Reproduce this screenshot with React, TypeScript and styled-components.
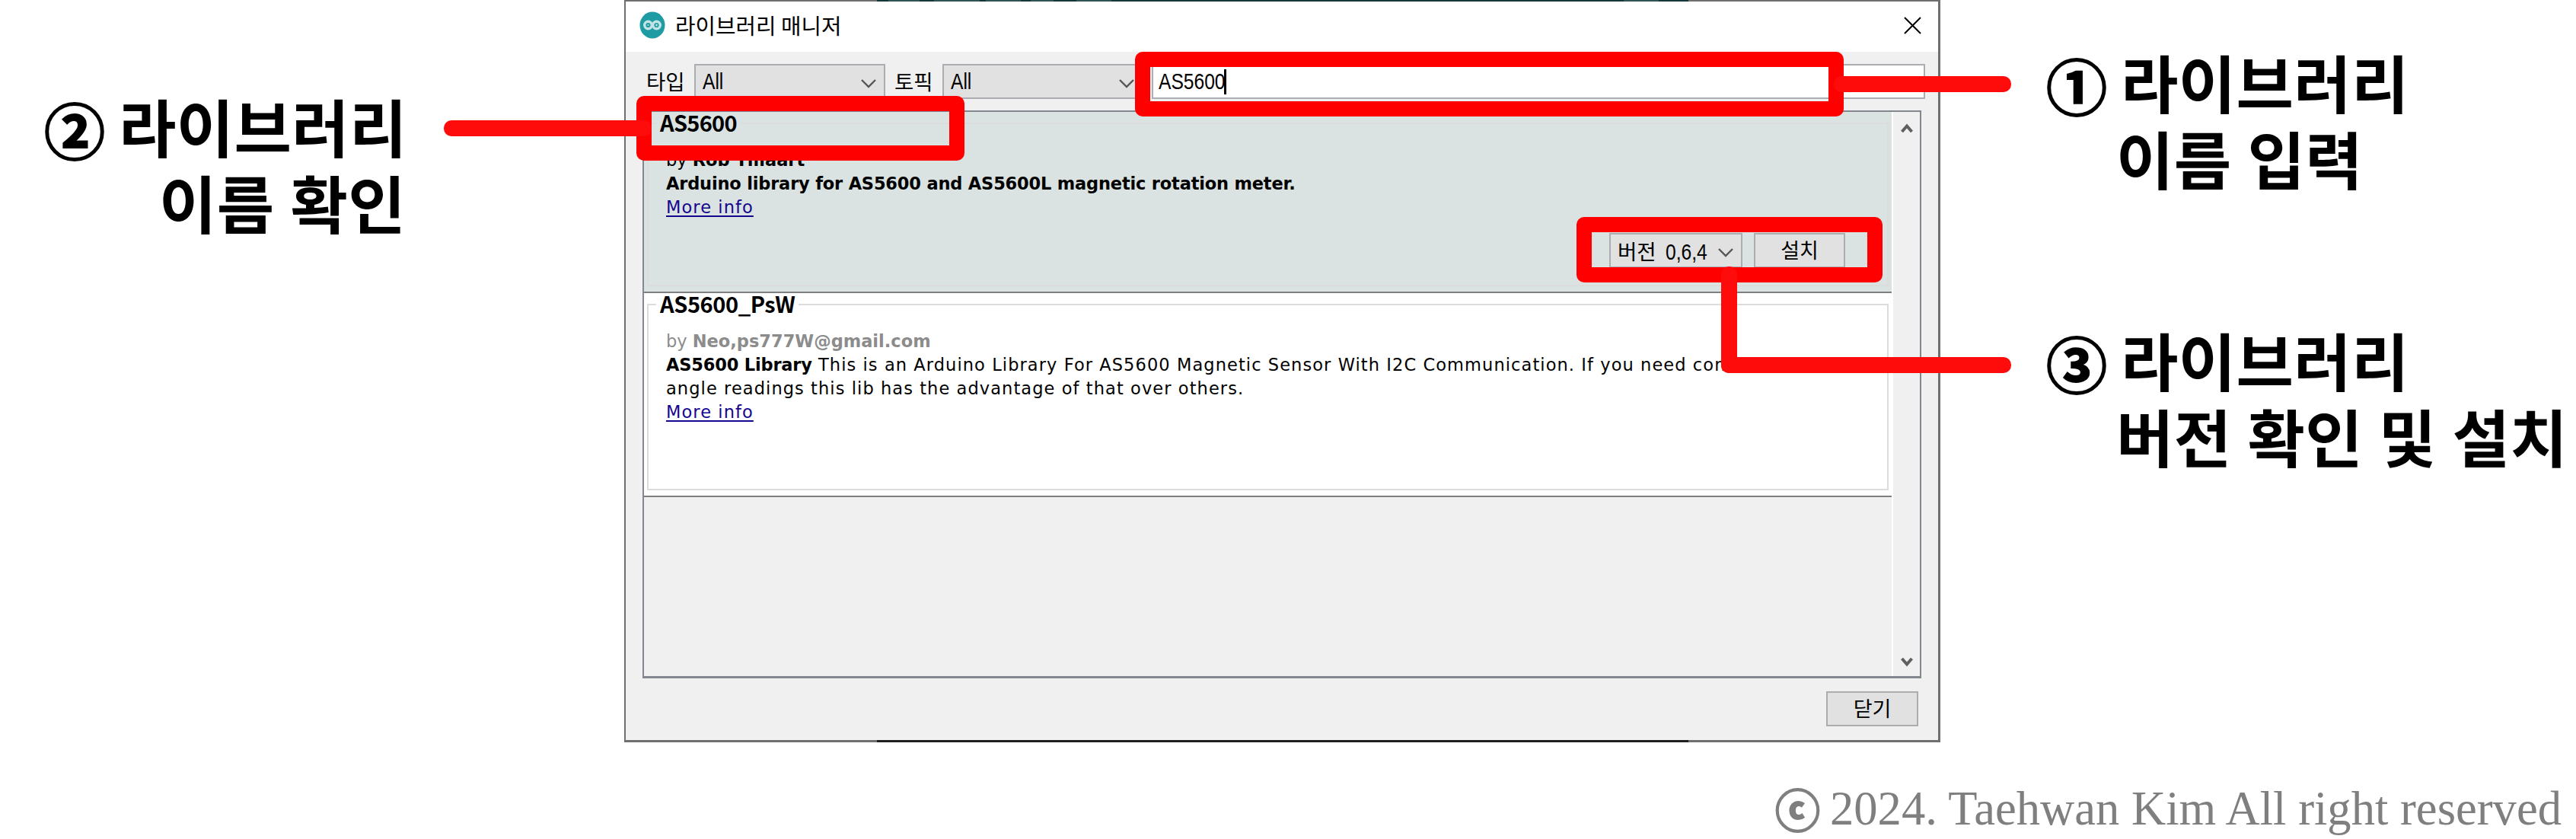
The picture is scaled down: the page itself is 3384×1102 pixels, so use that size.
import React from "react";
import styled, { createGlobalStyle } from "styled-components";

const GlobalStyle = createGlobalStyle`
  * {
    box-sizing: border-box;
  }

  body {
    margin: 0;
    background: #fff;
    overflow: hidden;
  }
`;

const KOREAN = `"Noto Sans CJK KR", sans-serif`;

const Slide = styled.div`
  position: relative;
  display: grid;
  grid-template-columns: 820px 1729px 835px;
  grid-template-rows: 975px 127px;
  width: 3384px;
  height: 1102px;
  color: #000;
  font-family: ${KOREAN};
`;

const Side = styled.div<{ $top: number; $gap?: number }>`
  display: flex;
  flex-direction: column;
  gap: ${(p) => p.$gap ?? 0}px;
  padding-top: ${(p) => p.$top}px;
`;

const Note = styled.div<{ $left: number; $indent: number }>`
  padding-left: ${(p) => p.$left}px;
  font-size: 82px;
  font-weight: 700;
  line-height: 100px;
  letter-spacing: 0.3px;
  word-spacing: 2px;
  white-space: nowrap;

  & > div:last-child {
    padding-left: ${(p) => p.$indent}px;
  }
`;

const NoteLine = styled.div`
  display: flex;
`;

const Marker = styled.span`
  width: 98px;
  margin: 3px 0 -3px -2px;
  font-size: 80px;
  -webkit-text-stroke: 2px #000;
`;

const Window = styled.div`
  display: flex;
  flex-direction: column;
  height: 975px;
  border: 2px solid #6f6f6f;
  border-right-width: 3px;
  border-bottom-width: 3px;
  background: #f0f0f0;
`;

const TitleBar = styled.div`
  display: flex;
  align-items: center;
  height: 66px;
  padding: 0 22px 4px 18px;
  background: #fff;
`;

const Title = styled.div`
  flex: 1;
  margin-left: 13px;
  font-size: 28.8px;
  line-height: 62px;
`;

const Toolbar = styled.div`
  display: flex;
  height: 77px;
  padding: 16px 17px 0 27px;
`;

const Label = styled.div<{ $width: number; $indent?: number }>`
  width: ${(p) => p.$width}px;
  padding-left: ${(p) => p.$indent ?? 0}px;
  font-size: 27.5px;
  line-height: 44px;
`;

const Select = styled.div<{ $width: number }>`
  display: flex;
  justify-content: space-between;
  align-items: center;
  width: ${(p) => p.$width}px;
  height: 46px;
  padding: 0 10px 0 9px;
  border: 2px solid #abadb3;
  background: #e1e1e1;
  font-size: 27.5px;
  line-height: 40px;
  word-spacing: 6px;
  white-space: nowrap;
`;

// condensed latin text, squeezed into the given width
const Narrow = styled.span<{ $width: number }>`
  display: inline-block;
  width: ${(p) => p.$width}px;
  font-family: "Liberation Sans", sans-serif;
  font-size: 30px;
  line-height: 36px;
  white-space: nowrap;
  transform: scaleX(0.82);
  transform-origin: left;
`;

const SearchInput = styled.div`
  display: flex;
  align-items: center;
  flex: 1;
  height: 46px;
  margin-left: 11px;
  padding-left: 7px;
  border: 2px solid #abadb3;
  background: #fff;
`;

const Caret = styled.span`
  width: 3px;
  height: 33px;
  background: #000;
`;

const ListPanel = styled.div`
  display: flex;
  width: 1680px;
  height: 746px;
  margin-left: 22px;
  border: 2px solid #828790;
  border-bottom-width: 3px;
`;

const List = styled.div`
  width: 1639px;
`;

const Scrollbar = styled.div`
  display: flex;
  flex-direction: column;
  justify-content: space-between;
  align-items: center;
  flex: 1;
  padding: 15px 0 12px;
  border-left: 2px solid #fff;
`;

const Item = styled.div<{ $active?: boolean; $height: number }>`
  height: ${(p) => p.$height}px;
  padding: 3px 4px 7px 4px;
  border-bottom: 2px solid #7f7f7f;
  background: ${(p) => (p.$active ? "#dae3e1" : "#fff")};
`;

const Group = styled.fieldset`
  display: flex;
  flex-direction: column;
  height: 100%;
  min-width: 0;
  margin: 0;
  padding: 0 0 0 23px;
  border: 2px solid #dcdcdc;
  font-family: "DejaVu Sans", sans-serif;
  font-size: 22.5px;
  line-height: 31px;
  letter-spacing: 1.08px;
  white-space: nowrap;

  & b {
    letter-spacing: -0.18px;
  }
`;

const Legend = styled.legend<{ $track: number }>`
  height: 24px;
  margin-left: -13px;
  padding: 0 5px;
  font-family: ${KOREAN};
  font-size: 29px;
  font-weight: 700;
  line-height: 21px;
  letter-spacing: ${(p) => p.$track}px;
`;

const Author = styled.div<{ $muted?: boolean }>`
  margin-top: 21px;
  color: ${(p) => (p.$muted ? "#8c8c8c" : "#000")};
  letter-spacing: 0;

  & b {
    letter-spacing: 0;
  }
`;

const Link = styled.a`
  align-self: flex-start;
  color: #150690;
  text-decoration: underline;
  text-decoration-thickness: 2px;
  text-underline-offset: 3px;
`;

const Actions = styled.div`
  display: flex;
  justify-content: flex-end;
  gap: 15px;
  margin-top: 18px;
  padding-right: 55px;
  font-family: ${KOREAN};
  letter-spacing: 0;
`;

const Button = styled.div<{ $width: number }>`
  width: ${(p) => p.$width}px;
  height: 46px;
  border: 2px solid #adadad;
  background: #e1e1e1;
  font-size: 27px;
  line-height: 39px;
  text-align: center;
`;

const Footer = styled.div`
  display: flex;
  justify-content: flex-end;
  padding: 17px 26px 0 0;
`;

const Copyright = styled.div`
  display: flex;
  grid-column: 1 / 4;
  justify-content: flex-end;
  padding: 50px 19px 0 0;
  color: #7f7f7f;
  font-family: "Liberation Serif", serif;
  font-size: 62.6px;
  line-height: 74px;

  & > span {
    margin-right: 13px;
    font-family: ${KOREAN};
    font-size: 59px;
    font-weight: 700;
    -webkit-text-stroke: 2px #7f7f7f;
  }
`;

// what shows of the windows behind, along the top and bottom edge
const Edge = styled.div<{ $bottom?: boolean }>`
  position: absolute;
  top: ${(p) => (p.$bottom ? 972 : 0)}px;
  left: 1152px;
  width: 1066px;
  height: ${(p) => (p.$bottom ? 3 : 2)}px;
  background: ${(p) =>
    p.$bottom
      ? "#1e201f"
      : `linear-gradient(90deg, #15363a 15px, #2f5357 15px 56px, #15363a 56px 75px,
          #2f5357 75px 135px, #15363a 135px 143px, #2f5357 143px 189px, #15363a 189px 202px,
          #2f5357 202px 232px, #15363a 232px 262px, #2f5357 262px 308px, #15363a 308px 981px,
          #2f5357 981px 1027px, #15363a 1027px)`};
`;

type Rect = { $x: number; $y: number; $w: number; $h: number };

const Frame = styled.div<Rect>`
  position: absolute;
  left: ${(p) => p.$x}px;
  top: ${(p) => p.$y}px;
  width: ${(p) => p.$w}px;
  height: ${(p) => p.$h}px;
  border: 20.5px solid #f00;
  border-radius: 10px;
`;

const Pointer = styled.div<Rect>`
  position: absolute;
  left: ${(p) => p.$x}px;
  top: ${(p) => p.$y}px;
  width: ${(p) => p.$w}px;
  height: ${(p) => p.$h}px;
  border-radius: 10px;
  background: #fe0c0c;
`;

function Logo() {
  return (
    <svg width="34" height="36" viewBox="0 0 34 36">
      <ellipse cx="17" cy="18" rx="16.5" ry="17.5" fill="#1f9ba3" />
      <g fill="none" stroke="#c3e4e4" strokeWidth="3.4">
        <circle cx="11.5" cy="18" r="4.8" />
        <circle cx="22.5" cy="18" r="4.8" />
      </g>
      <path d="M10 18h3M21 18h3M22.5 16.5v3" stroke="#c3e4e4" strokeWidth="1.2" />
    </svg>
  );
}

function CloseIcon() {
  return (
    <svg width="23" height="23" viewBox="0 0 23 23">
      <path d="M1 1L22 22M22 1L1 22" stroke="#000" strokeWidth="2" />
    </svg>
  );
}

function Chevron() {
  return (
    <svg width="20" height="18" viewBox="0 0 20 18">
      <path d="M1 7L10 16L19 7" fill="none" stroke="#555" strokeWidth="2.4" />
    </svg>
  );
}

function ScrollArrow({ down }: { down?: boolean }) {
  return (
    <svg width="16" height="13" viewBox="0 0 16 13">
      <path
        d={down ? "M1.5 2L8 9.5L14.5 2" : "M1.5 11L8 3.5L14.5 11"}
        fill="none"
        stroke="#606060"
        strokeWidth="4"
      />
    </svg>
  );
}

export default function App() {
  return (
    <Slide>
      <GlobalStyle />
      <Side $top={115}>
        <Note $left={60} $indent={149}>
          <NoteLine>
            <Marker>②</Marker>라이브러리
          </NoteLine>
          <div>이름 확인</div>
        </Note>
      </Side>
      <Window>
        <TitleBar>
          <Logo />
          <Title>라이브러리 매니저</Title>
          <CloseIcon />
        </TitleBar>
        <Toolbar>
          <Label $width={63}>타입</Label>
          <Select $width={251}>
            <Narrow $width={28}>All</Narrow>
            <Chevron />
          </Select>
          <Label $width={75} $indent={12}>
            토픽
          </Label>
          <Select $width={264}>
            <Narrow $width={28}>All</Narrow>
            <Chevron />
          </Select>
          <SearchInput>
            <Narrow $width={86}>AS5600</Narrow>
            <Caret />
          </SearchInput>
        </Toolbar>
        <ListPanel>
          <List>
            <Item $active $height={238}>
              <Group>
                <Legend $track={-0.7}>AS5600</Legend>
                <Author>
                  by <b>Rob Tillaart</b>
                </Author>
                <div>
                  <b>
                    Arduino library for AS5600 and AS5600L magnetic rotation
                    meter.
                  </b>
                </div>
                <Link>More info</Link>
                <Actions>
                  <Select $width={175}>
                    <span>
                      버전 <Narrow $width={56}>0,6,4</Narrow>
                    </span>
                    <Chevron />
                  </Select>
                  <Button $width={120}>설치</Button>
                </Actions>
              </Group>
            </Item>
            <Item $height={268}>
              <Group>
                <Legend $track={-0.4}>AS5600_PsW</Legend>
                <Author $muted>
                  by <b>Neo,ps777W@gmail.com</b>
                </Author>
                <div>
                  <b>AS5600 Library</b> This is an Arduino Library For AS5600
                  Magnetic Sensor With I2C Communication. If you need continuous
                </div>
                <div>
                  angle readings this lib has the advantage of that over others.
                </div>
                <Link>More info</Link>
              </Group>
            </Item>
          </List>
          <Scrollbar>
            <ScrollArrow />
            <ScrollArrow down />
          </Scrollbar>
        </ListPanel>
        <Footer>
          <Button $width={121}>닫기</Button>
        </Footer>
      </Window>
      <Side $top={57} $gap={165}>
        <Note $left={141} $indent={90}>
          <NoteLine>
            <Marker>①</Marker>라이브러리
          </NoteLine>
          <div>이름 입력</div>
        </Note>
        <Note $left={141} $indent={90}>
          <NoteLine>
            <Marker>③</Marker>라이브러리
          </NoteLine>
          <div>버전 확인 및 설치</div>
        </Note>
      </Side>
      <Copyright>
        <span>ⓒ</span>2024. Taehwan Kim All right reserved
      </Copyright>
      <Edge />
      <Edge $bottom />
      <Frame $x={1491} $y={68} $w={931} $h={85} />
      <Pointer $x={2409} $y={100} $w={233} $h={20.5} />
      <Frame $x={836} $y={125.5} $w={431} $h={85.5} />
      <Pointer $x={583} $y={158} $w={273} $h={20.5} />
      <Frame $x={2070.5} $y={285} $w={402.5} $h={85.5} />
      <Pointer $x={2261} $y={349.5} $w={21} $h={140} />
      <Pointer $x={2261} $y={469} $w={381} $h={20.5} />
    </Slide>
  );
}
